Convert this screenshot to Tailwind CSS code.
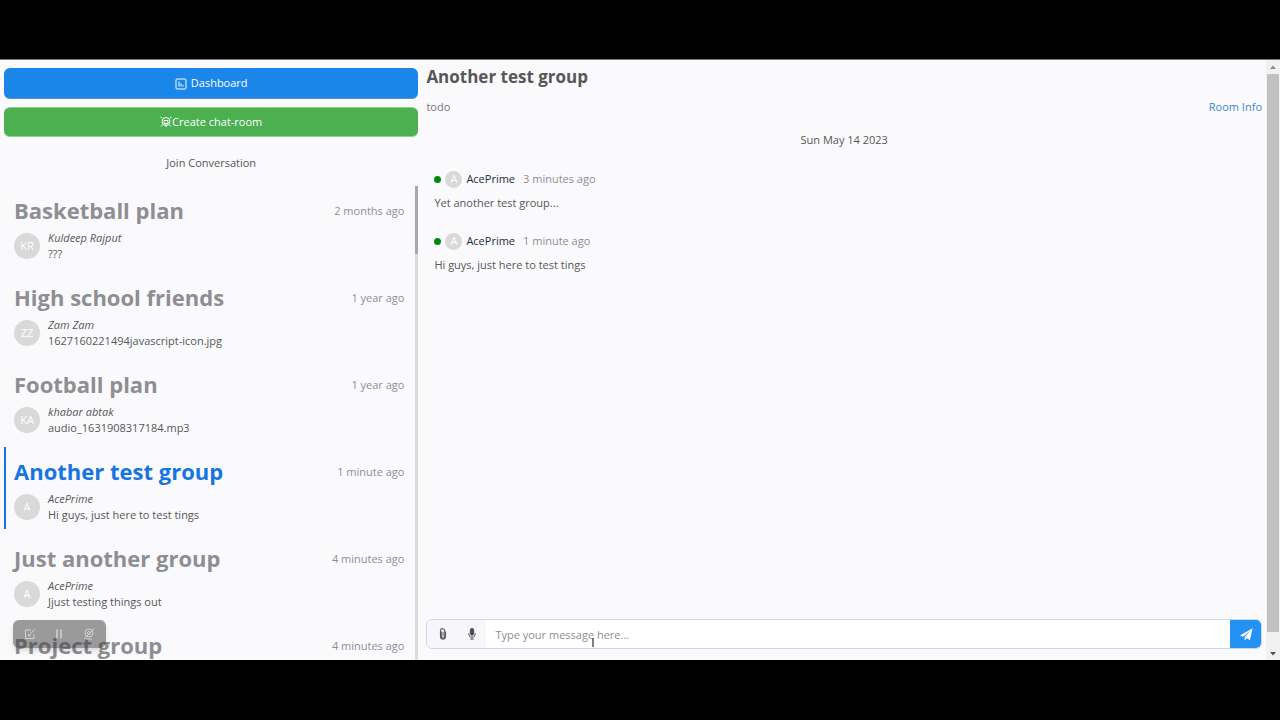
<!DOCTYPE html>
<html lang="en">
<head>
<meta charset="utf-8">
<meta name="viewport" content="width=device-width, initial-scale=1">
<title>Another test group</title>
<script src="https://cdn.jsdelivr.net/npm/@tailwindcss/browser@4"></script>
</head>
<body class="flex h-screen flex-col overflow-hidden bg-black pt-[59px] pb-[60px] font-['Open_Sans',sans-serif] text-[11px] text-[#575757]">
<div class="relative flex min-h-0 flex-1 overflow-hidden border-t border-[#777] bg-[#fafafc]">
  <aside class="flex w-[33%] min-w-0 flex-col px-1 pt-2">
    <button class="flex h-[31px] shrink-0 items-center justify-center gap-1 rounded-md border-b border-[#5b8fc4] bg-[#1a86ea] pt-px text-white">
      <svg class="size-3" viewBox="0 0 12 12" fill="none" stroke="currentColor" aria-hidden="true"><rect x="1" y="1" width="10" height="10" rx="1"/><path d="M4 3.500v5M6 5.500v3M8 7v1.500"/></svg>
      Dashboard
    </button>
    <button class="mt-2 flex h-[30px] shrink-0 items-center justify-center rounded-md border-y border-[#8fd092] bg-[#4caf50] text-white">
      <svg class="size-3" viewBox="0 0 12 12" fill="none" stroke="currentColor" aria-hidden="true"><circle cx="6" cy="5.500" r="4"/><path d="M4 4.500h4v3H4zM6 7.500V11M.5 1l1.500 1M11.500 1L10 2M1 10.500L2.500 9M11 10.500L9.500 9"/></svg>
      Create chat-room
    </button>
    <p class="mt-4 text-center leading-5">Join Conversation</p>
    <div class="mt-[13px] flex min-h-0 flex-1">
      <ul class="flex min-w-0 flex-1 flex-col gap-[5px] overflow-hidden">
        <li class="shrink-0"><a href="#" class="block h-[82px] border-l-2 border-transparent px-2 pt-2">
          <div class="flex items-center justify-between pr-[3px]"><h2 class="text-[22px] leading-8 font-bold text-[#8e8e93]">Basketball plan</h2><time class="pt-0.5 text-[#8e8e93]">2 months ago</time></div>
          <div class="mt-1 flex items-center gap-2"><span class="flex size-[26px] items-center justify-center rounded-full bg-[#d9d9d9] text-white">KR</span><div class="leading-4"><p class="italic">Kuldeep Rajput</p><p>???</p></div></div>
        </a></li>
        <li class="shrink-0"><a href="#" class="block h-[82px] border-l-2 border-transparent px-2 pt-2">
          <div class="flex items-center justify-between pr-[3px]"><h2 class="text-[22px] leading-8 font-bold text-[#8e8e93]">High school friends</h2><time class="pt-0.5 text-[#8e8e93]">1 year ago</time></div>
          <div class="mt-1 flex items-center gap-2"><span class="flex size-[26px] items-center justify-center rounded-full bg-[#d9d9d9] text-white">ZZ</span><div class="leading-4"><p class="italic">Zam Zam</p><p>1627160221494javascript-icon.jpg</p></div></div>
        </a></li>
        <li class="shrink-0"><a href="#" class="block h-[82px] border-l-2 border-transparent px-2 pt-2">
          <div class="flex items-center justify-between pr-[3px]"><h2 class="text-[22px] leading-8 font-bold text-[#8e8e93]">Football plan</h2><time class="pt-0.5 text-[#8e8e93]">1 year ago</time></div>
          <div class="mt-1 flex items-center gap-2"><span class="flex size-[26px] items-center justify-center rounded-full bg-[#d9d9d9] text-white">KA</span><div class="leading-4"><p class="italic">khabar abtak</p><p>audio_1631908317184.mp3</p></div></div>
        </a></li>
        <li class="shrink-0"><a href="#" aria-current="page" class="block h-[82px] border-l-2 border-[#1675e0] px-2 pt-2">
          <div class="flex items-center justify-between pr-[3px]"><h2 class="text-[22px] leading-8 font-bold text-[#1675e0]">Another test group</h2><time class="pt-0.5 text-[#8e8e93]">1 minute ago</time></div>
          <div class="mt-1 flex items-center gap-2"><span class="flex size-[26px] items-center justify-center rounded-full bg-[#d9d9d9] text-white">A</span><div class="leading-4"><p class="italic">AcePrime</p><p>Hi guys, just here to test tings</p></div></div>
        </a></li>
        <li class="shrink-0"><a href="#" class="block h-[82px] border-l-2 border-transparent px-2 pt-2">
          <div class="flex items-center justify-between pr-[3px]"><h2 class="text-[22px] leading-8 font-bold text-[#8e8e93]">Just another group</h2><time class="pt-0.5 text-[#8e8e93]">4 minutes ago</time></div>
          <div class="mt-1 flex items-center gap-2"><span class="flex size-[26px] items-center justify-center rounded-full bg-[#d9d9d9] text-white">A</span><div class="leading-4"><p class="italic">AcePrime</p><p>Jjust testing things out</p></div></div>
        </a></li>
        <li class="shrink-0"><a href="#" class="block h-[82px] border-l-2 border-transparent px-2 pt-2">
          <div class="flex items-center justify-between pr-[3px]"><h2 class="text-[22px] leading-8 font-bold text-[#8e8e93]">Project group</h2><time class="pt-0.5 text-[#8e8e93]">4 minutes ago</time></div>
        </a></li>
      </ul>
      <div class="w-[3px] bg-[#dcdcd9]"><div class="h-[68px] bg-[#a8a8aa]"></div></div>
    </div>
  </aside>

  <main class="flex min-w-0 flex-1 flex-col px-1 pb-[11px]">
    <header>
      <h1 class="pt-[3px] text-[17px] leading-7 font-bold">Another test group</h1>
      <div class="mt-1 flex justify-between leading-6"><p class="text-[#77777c]">todo</p><a href="#" class="text-[#3d86c6]">Room Info</a></div>
    </header>
    <section class="flex-1 px-2">
      <p class="mt-[11px] text-center leading-5">Sun May 14 2023</p>
      <article class="mt-[17px]">
        <div class="flex h-6 items-center"><span class="size-[7px] rounded-full bg-[#008a0c]"></span><span class="ml-1 flex size-[17px] items-center justify-center rounded-full bg-[#d9d9d9] text-white">A</span><span class="ml-1 text-[#272c36]">AcePrime</span><time class="ml-2 text-[#8e8e93]">3 minutes ago</time></div>
        <p class="leading-6">Yet another test group...</p>
      </article>
      <article class="mt-[14px]">
        <div class="flex h-6 items-center"><span class="size-[7px] rounded-full bg-[#008a0c]"></span><span class="ml-1 flex size-[17px] items-center justify-center rounded-full bg-[#d9d9d9] text-white">A</span><span class="ml-1 text-[#272c36]">AcePrime</span><time class="ml-2 text-[#8e8e93]">1 minute ago</time></div>
        <p class="leading-6">Hi guys, just here to test tings</p>
      </article>
    </section>
    <form class="relative flex h-[30px] overflow-hidden rounded-md border border-[#c9d9ec] bg-white">
      <button type="button" aria-label="Attach file" class="flex w-[31px] items-center justify-center bg-[#f7f7fa] text-[#575757]"><svg class="h-3 w-2.5" viewBox="0 0 10 14" fill="none" stroke="currentColor" stroke-width="1.200"><path d="M3 4v5.500a2 2 0 0 0 4 0V3.500a2.500 2.500 0 0 0-5-.5v7a3 3 0 0 0 6 0V4M5 4.500v5"/></svg></button>
      <button type="button" aria-label="Record audio" class="flex w-[28px] items-center justify-center bg-[#f7f7fa] text-[#4b4b4b]"><svg class="h-3 w-2.5" viewBox="0 0 10 14" fill="none" stroke="currentColor"><rect x="3" y="0.500" width="4" height="8" rx="2" fill="currentColor"/><path d="M1.200 6v1a3.800 3.800 0 0 0 7.600 0V6M5 10.800V13M3 13h4"/></svg></button>
      <input aria-label="Message" placeholder="Type your message here..." class="min-w-0 flex-1 px-[9px] pt-0.5 outline-none placeholder:text-[#8e8e93]">
      <button aria-label="Send" class="-my-px -mr-px flex w-8 items-center justify-center bg-[#2492f2] text-white"><svg class="size-[13px]" viewBox="0 0 14 14" fill="currentColor"><path d="M13.600.3 0 8l3.300 1.400L11.500 2.500 5 10v3.700l2-2.600 3.700 1.700z"/></svg></button>
      <svg class="pointer-events-none absolute top-[18px] left-[163px] h-[9px] w-[6px]" viewBox="0 0 6 9" stroke="#555" fill="none" aria-hidden="true"><path d="M3 0v9" stroke-width="1.500"/></svg>
    </form>
  </main>

  <div class="flex w-[14px] shrink-0 flex-col items-center bg-[#f1f1f1]" aria-hidden="true">
    <svg class="h-[14px] w-full" viewBox="0 0 14 14" fill="#8b8b8b"><path d="M4 9l3-3.500L10 9z"/></svg>
    <div class="w-3 flex-1 bg-[#c1c1c1]"></div>
    <svg class="h-[28px] w-full" viewBox="0 0 14 28" fill="#505050"><path d="M4 20l3 3.500 3-3.500z"/></svg>
  </div>

  <div class="absolute bottom-[12px] left-[13px] flex h-[28px] w-[93px] items-center justify-around rounded-md bg-[#3a3a3a]/50 px-0.5 text-[#d2d2d2] shadow-md">
    <button aria-label="Draw"><svg class="size-3" viewBox="0 0 12 12" fill="none" stroke="currentColor"><path d="M7 2H1.500v8.500H10V6M5 7.500l6-6.500M4.500 6v2h2"/></svg></button>
    <button aria-label="Pause"><svg class="size-3" viewBox="0 0 12 12" fill="none" stroke="currentColor" stroke-width="1.500"><path d="M4 1.500v9M8 1.500v9"/></svg></button>
    <button aria-label="Camera off"><svg class="size-3" viewBox="0 0 12 12" fill="none" stroke="currentColor"><circle cx="6" cy="5" r="4"/><circle cx="6" cy="5" r="1.500"/><path d="M1 11L11.500.5M3 11h6"/></svg></button>
  </div>
</div>
</body>
</html>
